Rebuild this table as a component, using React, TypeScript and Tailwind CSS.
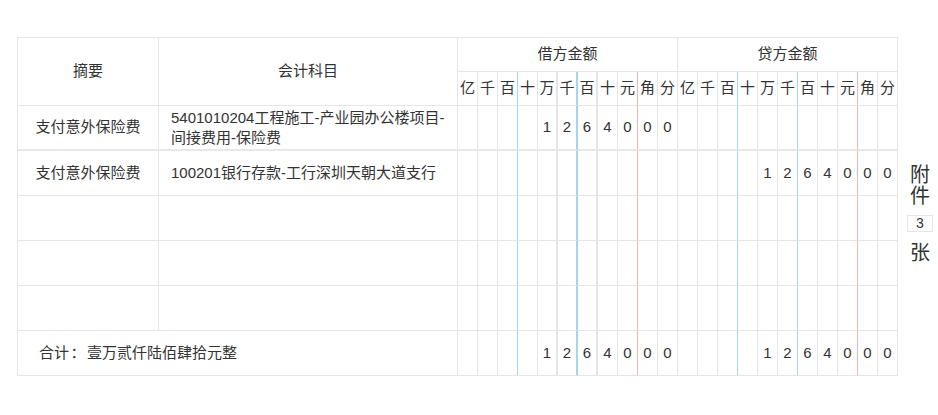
const units = ['亿', '千', '百', '十', '万', '千', '百', '十', '元', '角', '分'];

interface Entry {
  summary: string;
  subject: string[];
  debit: string;
  credit: string;
}

const entries: Entry[] = [
  {
    summary: '支付意外保险费',
    subject: ['5401010204工程施工-产业园办公楼项目-', '间接费用-保险费'],
    debit: '1264000',
    credit: '',
  },
  {
    summary: '支付意外保险费',
    subject: ['100201银行存款-工行深圳天朝大道支行'],
    debit: '',
    credit: '1264000',
  },
  { summary: '', subject: [], debit: '', credit: '' },
  { summary: '', subject: [], debit: '', credit: '' },
  { summary: '', subject: [], debit: '', credit: '' },
];

// right border of each digit column (index 0..10)
const debitBorder = [
  'border-r border-r-[#e5e5e5]',
  'border-r border-r-[#e5e5e5]',
  'border-r border-r-[#a6d4f2]',
  'border-r border-r-[#e5e5e5]',
  'border-r-2 border-r-[#e5e5e5]',
  'border-r-2 border-r-[#a6d4f2]',
  'border-r-2 border-r-[#e5e5e5]',
  'border-r border-r-[#e5e5e5]',
  'border-r border-r-[#f2b3b3]',
  'border-r border-r-[#e5e5e5]',
  'border-r border-r-[#e5e5e5]',
];

const creditBorder = [
  'border-r border-r-[#e5e5e5]',
  'border-r border-r-[#e5e5e5]',
  'border-r border-r-[#a6d4f2]',
  'border-r border-r-[#e5e5e5]',
  'border-r border-r-[#e5e5e5]',
  'border-r border-r-[#a6d4f2]',
  'border-r border-r-[#e5e5e5]',
  'border-r border-r-[#e5e5e5]',
  'border-r border-r-[#f2b3b3]',
  'border-r border-r-[#e5e5e5]',
  'border-r border-r-[#e5e5e5]',
];

function digitsOf(amount: string) {
  const cells: string[] = Array(11).fill('');
  const chars = amount.split('');
  for (let i = 0; i < chars.length; i++) {
    cells[11 - chars.length + i] = chars[i];
  }
  return cells;
}

function AmountCells({ amount, bottom }: { amount: string; bottom: string }) {
  const d = digitsOf(amount);
  return (
    <>
      {d.map((ch, i) => (
        <div key={'d' + i} className={`${debitBorder[i]} ${bottom} flex items-center justify-center`}>
          {ch}
        </div>
      ))}
    </>
  );
}

function CreditCells({ amount, bottom }: { amount: string; bottom: string }) {
  const d = digitsOf(amount);
  return (
    <>
      {d.map((ch, i) => (
        <div key={'c' + i} className={`${creditBorder[i]} ${bottom} flex items-center justify-center`}>
          {ch}
        </div>
      ))}
    </>
  );
}

export default function App() {
  return (
    <div
      className="w-[938px] h-[415px] bg-white pt-[37px] pl-[17px] flex items-center text-[15px] text-[#333]"
      style={{ fontFamily: '"Liberation Sans", "Noto Sans CJK SC", sans-serif' }}
    >
      <div className="self-start grid grid-cols-[141px_299px_repeat(22,20px)] grid-rows-[34px_34px_repeat(6,45px)] border-l border-t border-[#e5e5e5]">
        {/* header */}
        <div className="row-span-2 border-r border-b border-[#e5e5e5] flex items-center justify-center">摘要</div>
        <div className="row-span-2 border-r border-b border-[#e5e5e5] flex items-center justify-center">会计科目</div>
        <div className="col-span-11 border-r border-b border-[#e5e5e5] flex items-center justify-center">借方金额</div>
        <div className="col-span-11 border-r border-b border-[#e5e5e5] flex items-center justify-center">贷方金额</div>
        {units.map((u, i) => (
          <div key={'hd' + i} className={`${debitBorder[i]} border-b border-b-[#e5e5e5] flex items-center justify-center`}>
            {u}
          </div>
        ))}
        {units.map((u, i) => (
          <div key={'hc' + i} className={`${creditBorder[i]} border-b border-b-[#e5e5e5] flex items-center justify-center`}>
            {u}
          </div>
        ))}

        {/* entries */}
        {entries.map((e, r) => {
          const bottom = r === 0 ? 'border-b-2 border-b-[#e8e8e8]' : 'border-b border-b-[#e5e5e5]';
          return (
            <div key={'r' + r} className="contents">
              <div className={`border-r border-r-[#e5e5e5] ${bottom} flex items-center justify-center`}>{e.summary}</div>
              <div className={`border-r border-r-[#e5e5e5] ${bottom} flex flex-col justify-center pl-3 pr-1 leading-[20px]`}>
                {e.subject.map((s, k) => (
                  <span key={k} className="whitespace-nowrap">{s}</span>
                ))}
              </div>
              <AmountCells amount={e.debit} bottom={bottom} />
              <CreditCells amount={e.credit} bottom={bottom} />
            </div>
          );
        })}

        {/* total */}
        <div className="col-span-2 border-r border-b border-[#e5e5e5] flex items-center pl-[21px]">
          合计<span className="inline-block w-[18px] text-center">：</span>壹万贰仟陆佰肆拾元整
        </div>
        <AmountCells amount="1264000" bottom="border-b border-b-[#e5e5e5]" />
        <CreditCells amount="1264000" bottom="border-b border-b-[#e5e5e5]" />
      </div>

      <div className="flex flex-col items-center ml-[9px] mt-[-24px] text-[20px] leading-[21px] text-[#333]">
        <span>附</span>
        <span>件</span>
        <span className="mt-[8px] mb-[11px] w-[26px] h-[17px] border border-[#e5e5e5] text-[14px] leading-[15px] text-center">3</span>
        <span>张</span>
      </div>
    </div>
  );
}
